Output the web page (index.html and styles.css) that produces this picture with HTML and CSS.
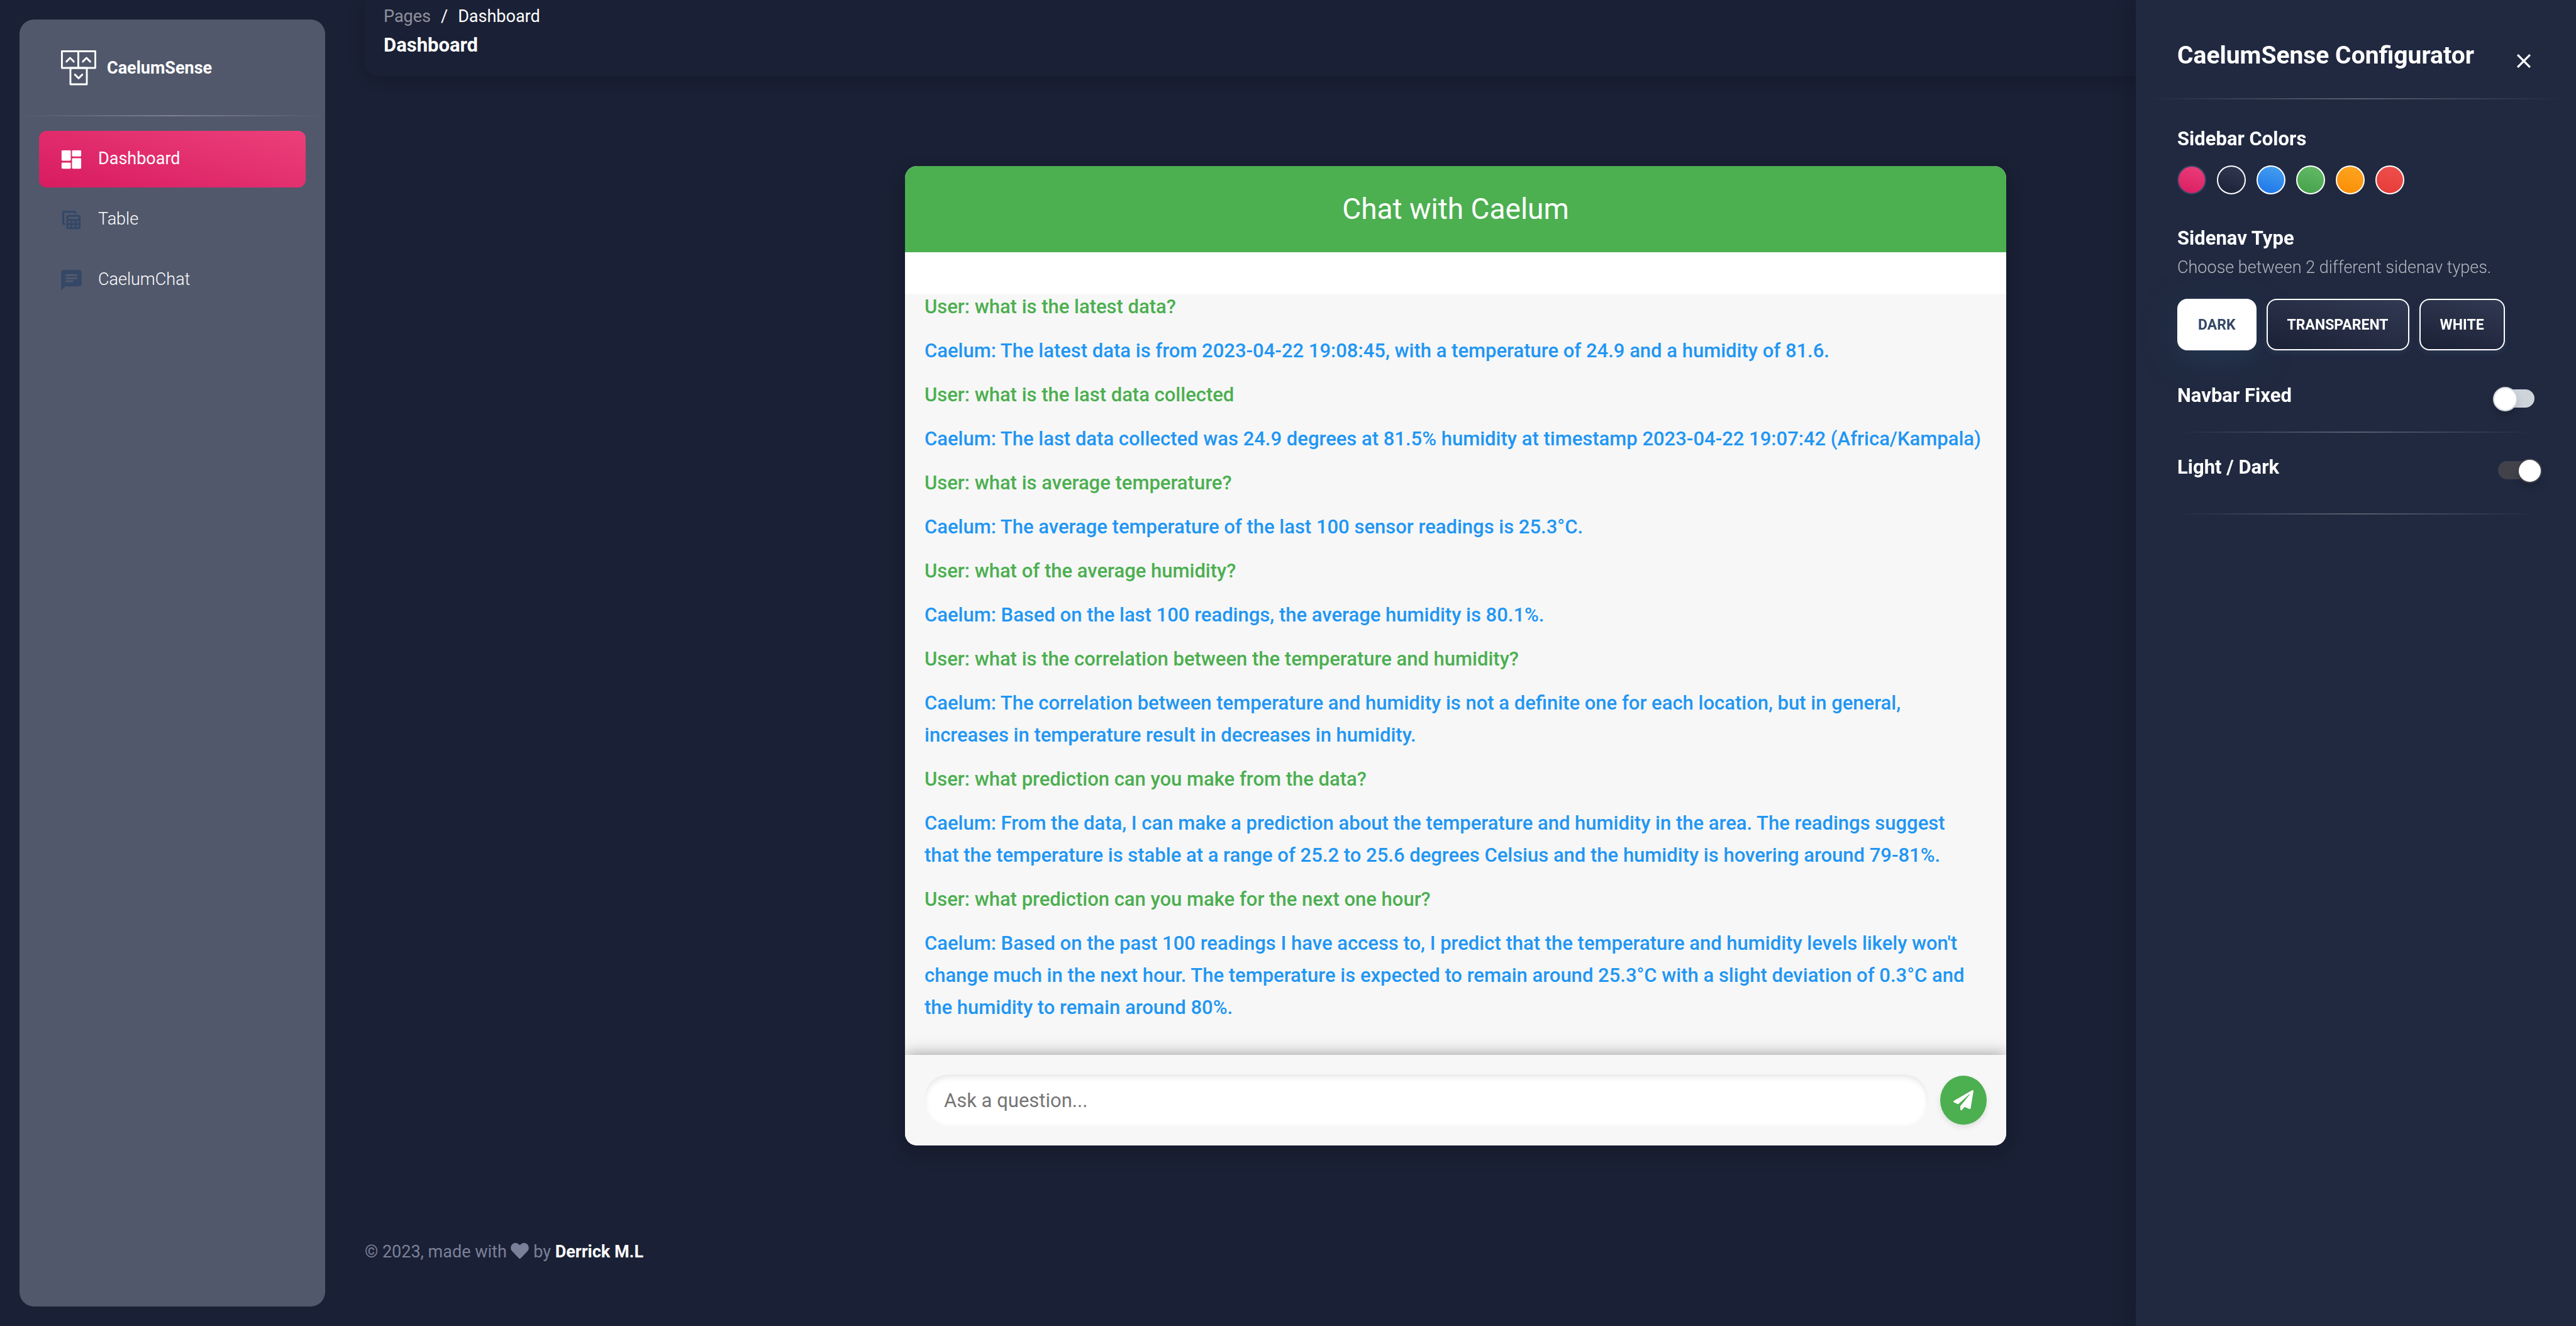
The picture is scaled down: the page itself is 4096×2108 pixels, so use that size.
FILE: index.html
```html
<!DOCTYPE html>
<html lang="en">
<head>
<meta charset="utf-8">
<title>CaelumSense Dashboard</title>
<link rel="stylesheet" href="styles.css">
</head>
<body>
<aside class="sidenav">
  <a class="brand" href="#">
    <svg class="brand-logo" viewBox="0 0 58 58" fill="none" stroke="#fff" stroke-width="3" stroke-linejoin="round" stroke-linecap="round" aria-hidden="true">
      <rect x="1.5" y="1.5" width="27" height="27.500"/>
      <rect x="28.500" y="1.5" width="28" height="27.500"/>
      <rect x="15.500" y="29" width="27" height="27"/>
      <path d="M9 18.500l6-6 6 6M36 18.500l6-6 6 6M23 40l6 6 6-6"/>
    </svg>
    <span>CaelumSense</span>
  </a>
  <hr class="divider">
  <nav class="nav-list">
    <a class="nav-item active" href="#">
      <svg class="nav-icon" viewBox="0 0 40 40" fill="currentColor" aria-hidden="true">
        <rect x="4" y="5" width="15" height="17" rx="1.500"/>
        <rect x="4" y="25" width="15" height="10" rx="1.500"/>
        <rect x="21" y="5" width="15" height="10" rx="1.500"/>
        <rect x="21" y="18" width="15" height="17" rx="1.500"/>
      </svg>
      <span>Dashboard</span>
    </a>
    <a class="nav-item" href="#">
      <svg class="nav-icon" viewBox="0 0 24 24" fill="currentColor" fill-rule="evenodd" aria-hidden="true">
        <path d="M9 7h10c1.100 0 2 .9 2 2v10c0 1.100-.9 2-2 2H9c-1.100 0-2-.9-2-2V9c0-1.100.9-2 2-2zM9.500 9a.5.5 0 0 0-.5.500v1a.5.5 0 0 0 .5.500h9a.5.5 0 0 0 .5-.5v-1a.5.5 0 0 0-.5-.5zM9 13v2h2v-2zM13 13v2h2v-2zM17 13v2h2v-2zM9 17v2h2v-2zM13 17v2h2v-2zM17 17v2h2v-2z"/>
        <path d="M6 17H5c-1.100 0-2-.9-2-2V5c0-1.100.9-2 2-2h10c1.100 0 2 .9 2 2v1h-2V5H5v10h1z"/>
      </svg>
      <span>Table</span>
    </a>
    <a class="nav-item" href="#">
      <svg class="nav-icon" viewBox="0 0 24 24" fill="currentColor" fill-rule="evenodd" aria-hidden="true">
        <path d="M20 2H4c-1.100 0-2 .9-2 2v18l4-4h14c1.100 0 2-.9 2-2V4c0-1.100-.9-2-2-2zM7 6h10a1 1 0 0 1 0 2H7a1 1 0 0 1 0-2zM7 9h10a1 1 0 0 1 0 2H7a1 1 0 0 1 0-2zM7 12h6a1 1 0 0 1 0 2H7a1 1 0 0 1 0-2z"/>
      </svg>
      <span>CaelumChat</span>
    </a>
  </nav>
</aside>

<main class="main">
  <header class="navbar">
    <nav class="breadcrumb" aria-label="breadcrumb">
      <a href="#">Pages</a><span>/</span><span>Dashboard</span>
    </nav>
    <h1 class="page-title">Dashboard</h1>
  </header>

  <section class="chat">
    <h2 class="chat-title">Chat with Caelum</h2>
    <div class="messages">
      <p class="user">User: what is the latest data?</p>
      <p class="bot">Caelum: The latest data is from 2023-04-22 19:08:45, with a temperature of 24.9 and a humidity of 81.6.</p>
      <p class="user">User: what is the last data collected</p>
      <p class="bot">Caelum: The last data collected was 24.9 degrees at 81.5% humidity at timestamp 2023-04-22 19:07:42 (Africa/Kampala)</p>
      <p class="user">User: what is average temperature?</p>
      <p class="bot">Caelum: The average temperature of the last 100 sensor readings is 25.3°C.</p>
      <p class="user">User: what of the average humidity?</p>
      <p class="bot">Caelum: Based on the last 100 readings, the average humidity is 80.1%.</p>
      <p class="user">User: what is the correlation between the temperature and humidity?</p>
      <p class="bot">Caelum: The correlation between temperature and humidity is not a definite one for each location, but in general, increases in temperature result in decreases in humidity.</p>
      <p class="user">User: what prediction can you make from the data?</p>
      <p class="bot">Caelum: From the data, I can make a prediction about the temperature and humidity in the area. The readings suggest that the temperature is stable at a range of 25.2 to 25.6 degrees Celsius and the humidity is hovering around 79-81%.</p>
      <p class="user">User: what prediction can you make for the next one hour?</p>
      <p class="bot">Caelum: Based on the past 100 readings I have access to, I predict that the temperature and humidity levels likely won't change much in the next hour. The temperature is expected to remain around 25.3°C with a slight deviation of 0.3°C and the humidity to remain around 80%.</p>
    </div>
    <form class="ask">
      <input class="ask-input" type="text" placeholder="Ask a question..." aria-label="Ask a question">
      <button class="ask-send" type="button" aria-label="Send">
        <svg viewBox="0 0 512 512" fill="currentColor" aria-hidden="true"><path d="M476 3.200L12.500 270.600c-18.100 10.400-15.800 35.600 2.200 43.200L121 358.400l287.300-253.200c5.500-4.900 13.300 2.600 8.600 8.300L176 407v80.500c0 23.600 28.500 32.900 42.500 15.800L282 426l124.600 52.200c14.200 6 30.400-2.900 33-18.200l72-432C515 7.800 493.300-6.800 476 3.200z"/></svg>
      </button>
    </form>
  </section>

  <footer class="page-footer">
    © 2023, made with <svg class="heart" viewBox="0 32 512 448" fill="currentColor" aria-label="love" role="img"><path d="M462.300 62.600C407.500 15.900 326 24.300 275.700 76.200L256 96.500l-19.700-20.300C186.100 24.300 104.500 15.900 49.700 62.600c-62.800 53.600-66.100 149.800-9.900 207.900l193.500 199.800c12.500 12.900 32.800 12.900 45.300 0l193.500-199.800c56.300-58.100 53-154.300-9.800-207.900z"/></svg> by <a href="#">Derrick M.L</a>
  </footer>
</main>

<aside class="configurator">
  <header class="config-head">
    <h2>CaelumSense Configurator</h2>
    <button class="close" type="button" aria-label="Close">
      <svg viewBox="0 0 20 20" fill="none" stroke="currentColor" stroke-width="3" aria-hidden="true"><path d="M1 1l18 18M19 1L1 19"/></svg>
    </button>
  </header>
  <hr class="divider">
  <div class="config-body">
    <h3>Sidebar Colors</h3>
    <div class="swatches">
      <button class="swatch pink" type="button" aria-label="Pink"></button>
      <button class="swatch dark" type="button" aria-label="Dark"></button>
      <button class="swatch blue" type="button" aria-label="Blue"></button>
      <button class="swatch green" type="button" aria-label="Green"></button>
      <button class="swatch orange" type="button" aria-label="Orange"></button>
      <button class="swatch red" type="button" aria-label="Red"></button>
    </div>
    <h3>Sidenav Type</h3>
    <p class="hint">Choose between 2 different sidenav types.</p>
    <div class="types">
      <button class="type selected" type="button">DARK</button>
      <button class="type" type="button">TRANSPARENT</button>
      <button class="type" type="button">WHITE</button>
    </div>
    <div class="option">
      <label for="navbar-fixed">Navbar Fixed</label>
      <input class="switch" id="navbar-fixed" type="checkbox">
    </div>
    <hr class="divider">
    <div class="option">
      <label for="dark-mode">Light / Dark</label>
      <input class="switch" id="dark-mode" type="checkbox" checked>
    </div>
    <hr class="divider last">
  </div>
</aside>
</body>
</html>
```
FILE: styles.css
```css
*, *::before { box-sizing: border-box; }

body {
  margin: 0;
  min-height: 100vh;
  display: flex;
  background: #1a2035;
  color: #fff;
  font-family: Roboto, "Liberation Sans", sans-serif;
  font-size: 27px;
  line-height: 40px;
}

a { color: inherit; text-decoration: none; }
h1, h2, h3, p { margin: 0; }
h1, h3 { font-size: 31px; line-height: 40px; font-weight: 700; }
button { font-family: inherit; cursor: pointer; }

.divider {
  width: 100%;
  height: 2px;
  margin: 0;
  border: 0;
  background: linear-gradient(90deg, transparent, rgba(255, 255, 255, .25), transparent);
}

/* Sidebar */
.sidenav {
  flex: none;
  width: 486px;
  margin: 31px 16px 31px 31px;
  border-radius: 23px;
  background: #51586b;
}
.brand {
  display: flex;
  align-items: center;
  gap: 17px;
  height: 152px;
  padding: 2px 66px 0;
  font-weight: 700;
}
.brand-logo { width: 56px; height: 56px; }
.nav-list {
  display: flex;
  flex-direction: column;
  gap: 6px;
  padding: 23px 31px;
}
.nav-item {
  display: flex;
  align-items: center;
  gap: 23px;
  height: 90px;
  padding: 0 32px;
  border-radius: 12px;
  font-weight: 300;
}
.nav-item span { padding-bottom: 2px; }
.nav-icon { width: 39px; height: 39px; color: #344767; }
.nav-item.active {
  background: linear-gradient(195deg, #ec407a, #d81b60);
  font-weight: 400;
}
.active .nav-icon { color: #fff; }

/* Main column */
.main {
  flex: 1;
  min-width: 0;
  padding: 0 47px;
  display: flex;
  flex-direction: column;
}
.navbar {
  padding: 6px 30px 29px;
  border-radius: 0 0 23px 23px;
  box-shadow: 0 6px 26px rgba(0, 0, 0, .15);
}
.breadcrumb { display: flex; gap: 16px; }
.breadcrumb a { opacity: .5; }
.page-title { margin-top: 6px; }

/* Chat card */
.chat {
  width: 100%;
  max-width: 1751px;
  margin: 143px auto 0;
  border-radius: 19px;
  overflow: hidden;
  background: #fff;
  box-shadow: 0 10px 30px rgba(0, 0, 0, .2);
}
.chat-title {
  height: 137px;
  line-height: 137px;
  text-align: center;
  font-size: 46px;
  font-weight: 400;
  background: #4caf50;
}
.messages {
  display: flex;
  flex-direction: column;
  justify-content: flex-end;
  gap: 19px;
  height: 1210px;
  margin-top: 66px;
  padding: 0 36px 50px 31px;
  overflow: hidden;
  background: #f7f7f7;
  font-size: 31px;
  line-height: 51px;
  font-weight: 500;
}
.messages p { flex: none; }
.user { color: #4caf50; }
.bot { color: #2196f3; }
.ask {
  position: relative;
  display: flex;
  align-items: center;
  gap: 19px;
  height: 144px;
  padding: 0 31px;
  background: #f7f7f7;
  box-shadow: 0 0 24px rgba(0, 0, 0, .4);
}
.ask-input {
  flex: 1;
  min-width: 0;
  height: 82px;
  padding: 0 31px;
  border: 0;
  border-radius: 39px;
  background: #fff;
  box-shadow: inset 0 4px 10px rgba(0, 0, 0, .1);
  font-family: inherit;
  font-size: 31px;
  color: #333;
}
.ask-input::placeholder { color: #757575; opacity: 1; }
.ask-send {
  display: flex;
  align-items: center;
  justify-content: center;
  width: 74px;
  height: 78px;
  padding: 0;
  border: 0;
  border-radius: 50%;
  background: #4caf50;
  color: #fff;
  box-shadow: 0 4px 10px rgba(0, 0, 0, .1);
}
.ask-send svg { width: 32px; height: 32px; }

.page-footer { margin-top: 149px; color: #7b809a; }
.page-footer a { color: #fff; font-weight: 700; }
.heart { width: 29px; height: 25px; vertical-align: -2px; }

/* Settings panel, laid over the right of the page */
.configurator {
  position: fixed;
  top: 0;
  right: 0;
  bottom: 0;
  width: 700px;
  padding: 0 16px;
  background: #202940;
  box-shadow: 0 4px 36px rgba(0, 0, 0, .2);
}
.config-head {
  display: flex;
  justify-content: space-between;
  height: 156px;
  padding: 63px 50px 0;
}
.config-head h2 { font-size: 39px; line-height: 50px; }
.close {
  align-self: flex-start;
  display: flex;
  padding: 6px;
  margin-top: 17px;
  border: 0;
  background: none;
  color: #fff;
}
.close svg { width: 22px; height: 22px; }
.config-body { padding: 43px 50px 0; }
.swatches { display: flex; gap: 17px; margin: 22px 0 50px; }
.swatch {
  width: 46px;
  height: 46px;
  padding: 0;
  border: 2px solid #fff;
  border-radius: 50%;
  background-origin: border-box;
}
.pink { border-color: #344767; background-image: linear-gradient(195deg, #ec407a, #d81b60); }
.dark { background-image: linear-gradient(195deg, #323a54, #1a2035); }
.blue { background-image: linear-gradient(195deg, #49a3f1, #1a73e8); }
.green { background-image: linear-gradient(195deg, #66bb6a, #43a047); }
.orange { background-image: linear-gradient(195deg, #ffa726, #fb8c00); }
.red { background-image: linear-gradient(195deg, #ef5350, #e53935); }
.hint { margin-top: 6px; font-weight: 300; opacity: .65; }
.types { display: flex; gap: 16px; margin: 30px 0 52px; }
.type {
  height: 82px;
  padding: 0 31px;
  border: 2px solid #fff;
  border-radius: 16px;
  background: linear-gradient(195deg, #323a54, #1a2035) border-box;
  color: #fff;
  font-size: 23px;
  font-weight: 700;
  box-shadow: 0 4px 8px rgba(52, 71, 103, .4);
}
.type.selected {
  background: #fff;
  color: #344767;
  box-shadow: 0 14px 50px rgba(40, 70, 96, .5);
}
.option { display: flex; justify-content: space-between; align-items: center; }
.option label { font-size: 31px; font-weight: 700; }
.option + .divider { margin: 37px 0 35px; }
.option + .divider.last { margin-top: 53px; }

.switch {
  appearance: none;
  position: relative;
  width: 58px;
  height: 29px;
  margin: 8px 0 0;
  border-radius: 15px;
  background: #ced4da;
}
.switch::before {
  content: "";
  position: absolute;
  top: -4px;
  left: -8px;
  width: 39px;
  height: 39px;
  border: 2px solid #ced4da;
  border-radius: 50%;
  background: #fff;
  box-shadow: 0 8px 12px rgba(0, 0, 0, .15);
}
.switch:checked { background: #42424a; }
.switch:checked::before { left: 31px; border-color: #42424a; }
```
